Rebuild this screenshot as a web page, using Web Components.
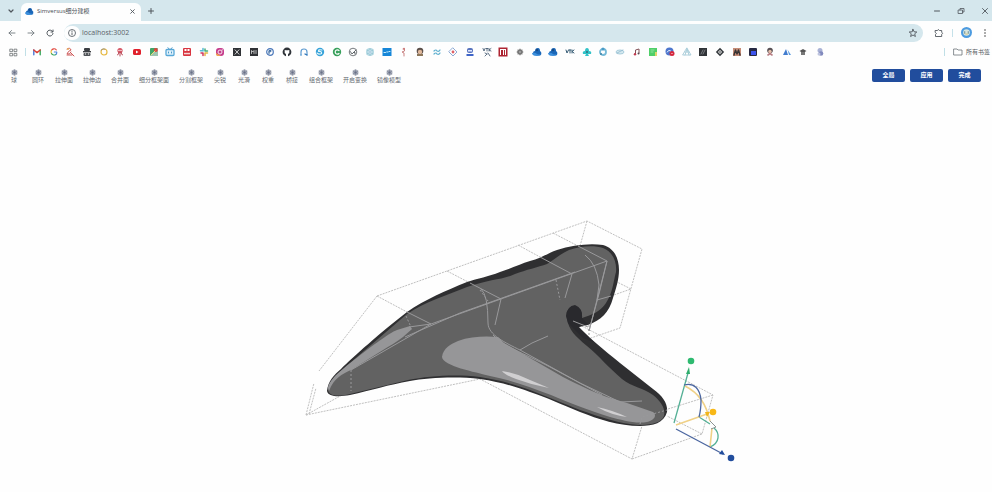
<!DOCTYPE html>
<html lang="zh-CN">
<head>
<meta charset="utf-8">
<title>Simversus细分建模</title>
<style>
html, body { height: 100%; }
body { margin: 0; background: #fefefe; font-family: "Open Sans", "Noto Sans CJK SC", sans-serif; color: #555b61; }
</style>
</head>
<body>
<browser-window></browser-window>
<script>
const BASE = `<style>
*{box-sizing:border-box}
button{border:0;padding:0;margin:0;background:none;font:inherit;color:inherit;display:flex;align-items:center;justify-content:center;flex:none}
svg{display:block}
</style>`;

function define(name, html, setup) {
  customElements.define(name, class extends HTMLElement {
    constructor() {
      super();
      this.attachShadow({ mode: 'open' }).innerHTML = BASE + html;
    }
    connectedCallback() {
      if (setup && !this.ready) { this.ready = true; setup(this, this.shadowRoot); }
    }
  });
}

const stroke = (d, w = 1, c = '#50575d') => `<path d="${d}" fill="none" stroke="${c}" stroke-width="${w}" stroke-linecap="round" stroke-linejoin="round"/>`;
const fill = (d, c) => `<path d="${d}" fill="${c}"/>`;
const dot = (x, y, r, c) => `<circle cx="${x}" cy="${y}" r="${r}" fill="${c}"/>`;
const ring = (x, y, r, w, c) => `<circle cx="${x}" cy="${y}" r="${r}" fill="none" stroke="${c}" stroke-width="${w}"/>`;
const box = (x, y, w, h, c, r = 0) => `<rect x="${x}" y="${y}" width="${w}" height="${h}" rx="${r}" fill="${c}"/>`;

const cloud = fill('M1 6Q1 4 3 4Q3 1 6 1Q8 1 8 4Q10 5 9 8Q7 9 4 8Q1 9 1 6Z', '#1b67b8') + fill('M0 6Q3 5 5 7Q7 8 9 7Q8 9 5 9Q0 9 0 6Z', '#3c8fdc') + dot(5, 3, 1.2, '#174a86');

const ICONS = {
  down: stroke('M3 4L5 6L7 4', 1.2),
  close: stroke('M3 3L7 7M7 3L3 7', 1),
  plus: stroke('M5 2.5V7.5M2.5 5H7.5', 1),
  min: stroke('M2.5 5H7.5', 1),
  restore: stroke('M2.5 4H6.5V7.5H2.5ZM4 4V2.5H8V6H6.5', .8),
  exit: stroke('M2.5 2.5L7.5 7.5M7.5 2.5L2.5 7.5', .9),
  back: stroke('M8 5H2M4.5 2.5L2 5L4.5 7.5', .9, '#737a80'),
  next: stroke('M2 5H8M5.5 2.5L8 5L5.5 7.5', .9, '#737a80'),
  reload: stroke('M7.6 3.5A3 3 0 1 0 8 5.5M8 2V4H6', 1),
  info: ring(5, 5, 3.5, .9, '#5c6369') + stroke('M5 4.8V6.7', .9) + dot(5, 3.2, .6, '#50575d'),
  star: stroke('M5 1.3L6.1 3.8L8.8 4L6.7 5.8L7.4 8.5L5 7L2.6 8.5L3.3 5.8L1.2 4L3.9 3.8Z', .9),
  ext: stroke('M1.5 2.5H3.5Q4 .5 5.5 2.5H7.7V4.2Q9.6 5.2 7.7 6.3V8.5H1.5V6.5Q3.5 5.5 1.5 4.5Z', .9),
  more: dot(5, 2, .8, '#444') + dot(5, 5, .8, '#444') + dot(5, 8, .8, '#444'),
  avatar: dot(5, 5, 5, '#4c9be0') + dot(5, 5, 3, '#d9e6df') + stroke('M3.4 4.2V5.8M6.6 4.2V5.8', .9, '#688b8f') + stroke('M4.3 6.4H5.7', .7, '#d7b85d'),
  apps: stroke('M1.3 1.3H4V4H1.3ZM6 1.3H8.7V4H6ZM1.3 6H4V8.7H1.3ZM6 6H8.7V8.7H6Z', .8, '#5c6165'),
  folder: stroke('M1 2H4L5 3H9V8H1Z', .8, '#6c7379'),
  tool: dot(5, 5, 4.2, '#a7acb9') + stroke('M5 1V9M1.5 3L8.5 7M8.5 3L1.5 7', .7, '#70778b') + dot(5, 5, 1.5, '#687087'),
  site: cloud
};

const BOOKMARKS = [
  ['Gmail', stroke('M1.8 7.8V3', 1.4, '#4978d8') + stroke('M8.2 7.8V3', 1.4, '#37a65a') + stroke('M1.8 3L5 5.6L8.2 3', 1.5, '#dc4136')],
  ['Google', stroke('M7.3 2.8A3 3 0 0 0 2.4 3.5', 1.1, '#e2483e') + stroke('M2.4 3.5A3 3 0 0 0 2.5 6.6', 1.1, '#efb92f') + stroke('M2.5 6.6A3 3 0 0 0 7 7.3', 1.1, '#38a85c') + stroke('M7 7.3Q8 6.3 7.8 5H5.3', 1.1, '#4b84dd')],
  ['Figure', stroke('M2 2Q5 0 6 3Q3 4 2 7Q5 8 6 5M6 6L9 9M2 8H7', 1, '#cd5757') + dot(3, 2, 1, '#e6ac5a')],
  ['Agent', box(2, 1, 6, 3, '#3b3e42', 1) + box(1, 4, 8, 1.4, '#3b3e42') + box(1.5, 6, 7, 3, '#505358', 1) + dot(3.5, 7, .7, '#ddd') + dot(6.5, 7, .7, '#ddd')],
  ['Ring', ring(5, 5, 3, 1.2, '#e6b942') + stroke('M2 3Q4 1 6 2', .8, '#8c8170')],
  ['Octopus', dot(5, 3.5, 2.6, '#d55262') + stroke('M2.5 8Q4 8 4 5M7.5 8Q6 8 6 5M5 6V9', 1, '#b74351') + dot(4, 3.5, .7, '#fff') + dot(6, 3.5, .7, '#fff')],
  ['YouTube', box(1, 2, 8, 6, '#e0212c', 1.6) + fill('M4 3.6V6.4L6.5 5Z', '#fff')],
  ['Maps', box(1, 1, 8, 8, '#43a467', 1) + fill('M1 9L9 1V9Z', '#9dc4b0') + dot(6.8, 3, 2, '#d9473f') + stroke('M2 8L6 4', 1, '#f5e17b')],
  ['Bilibili', `<rect x="1" y="2.5" width="8" height="6" rx="1" fill="#dff1fb" stroke="#57a7d7" stroke-width="1.3"/>` + stroke('M3 .7L4.2 2M7 .7L5.8 2M3.5 5V6M6.5 5V6', 1, '#4898c8')],
  ['Calendar', box(1, 1, 8, 8, '#d9343f', 1) + box(2.5, 2, 2, 2, '#fff') + box(5.5, 2, 2, 2, '#fff') + box(2, 5.8, 6, 1.5, '#f5d6d6')],
  ['Slack', stroke('M4 1.5V4M1.5 3.7H3.5', 1.5, '#54b9d5') + stroke('M6 2V4M6.5 4H8.5', 1.5, '#46ae79') + stroke('M2 6H4V8.5', 1.5, '#cf3860') + stroke('M6 6V8.5M6.5 6H8.5', 1.5, '#e6b345')],
  ['Instagram', box(1, 1, 8, 8, '#c53c8c', 3) + fill('M1 6L6 9H3Q1 9 1 7Z', '#f2a74c') + ring(5, 5, 2, 1, '#f8e4ec') + dot(7.2, 2.8, .6, '#fff')],
  ['X', box(1, 1, 8, 8, '#303236') + stroke('M3 2.8L7 7.2M7 2.8L3 7.2', .8, '#eee')],
  ['M1', box(1, 1, 8, 8, '#303236') + stroke('M2.5 6.5V3.5L3.7 5L5 3.5V6.5M7 3.5V6.5', .8, '#ddd')],
  ['Blue badge', ring(5, 5, 3.3, 1.2, '#4b78ba') + stroke('M4 7V3.4H6Q7 5 4 5', 1, '#33649e')],
  ['GitHub', dot(5, 5, 4.4, '#303439') + fill('M2.7 3L4 3.3H6L7.3 3V6L6 7V10H4V7L2.7 6Z', '#fff')],
  ['Arch', stroke('M2 8V5Q2 2 5 2Q8 2 8 5V8', 1.2, '#5e9bd0') + stroke('M6 7L8 8', 1.3, '#2871b6') + dot(2, 8, .8, '#6ca6d7')],
  ['Swirl', dot(5, 5, 4.2, '#36a2d9') + stroke('M7 3Q3 2 3.5 4.5Q7 4 6.6 6.6Q4 8 2 6', 1.1, '#e3f5fa')],
  ['Green C', dot(5, 5, 4.2, '#38a05c') + stroke('M7 3.5A2.2 2.2 0 1 0 7 6.5', 1.2, '#fff')],
  ['VS', ring(5, 5, 3.8, .8, '#555b60') + stroke('M2.3 4.5L4 7L8 3M5.5 5.5H7V7', .9, '#555b60')],
  ['Atom', dot(5, 5, 4, '#b4d9e3') + stroke('M2 3L8 7M2 7L8 3M5 1.5V8.5', .6, '#7fb7c9') + ring(5, 5, 1.3, .6, '#eef')],
  ['SPLINE', box(.5, 1, 9, 8, '#1686d8') + stroke('M2 5.5H3.5M4.7 5H6M7 4.5H8', 1, '#c9ecfa')],
  ['Runner', stroke('M5 2H6.5V4L4 5L6 6V9', 1, '#c98282') + dot(6, 1.8, 1, '#cc7777')],
  ['Portrait', dot(5, 4, 3.3, '#5b4e49') + dot(5, 5, 2.2, '#e1b99c') + box(2, 7, 6, 2, '#8c765a')],
  ['Tailwind', stroke('M2 4Q4 2 5 4Q7 5 8 3M2 7Q4 5 5 7Q7 8 8 6', 1.2, '#5dafcf')],
  ['Diamond', stroke('M5 1L9 5L5 9L1 5Z', 1, '#8eaad4') + dot(5, 5, 1.4, '#df5f65')],
  ['Robot', box(2, 1, 6, 5, '#5873bd', 2) + box(1.5, 7, 7, 2, '#3e64c8') + box(3, 3, 4, 1.5, '#dfe8ff')],
  ['VTK text', stroke('M1 1.5L2 4L3 1.5M4 1.5H6M5 1.5V4M7 1.5V4M9 1.5L7 3L9 4M3 6L5 7M6 6L8 9M3 9L5 7', .8, '#39506a')],
  ['npm', box(.5, .5, 9, 9, '#ae2532') + box(2, 2, 6, 6, '#fff') + box(3, 3, 2, 5, '#ae2532') + box(6, 3, 1, 5, '#ae2532')],
  ['Gear', dot(5, 5, 2.8, '#777') + stroke('M5 2V8M2 5H8M3 3L7 7M7 3L3 7', .8, '#777') + dot(5, 5, 1, '#aaa')],
  ['Simversus', cloud],
  ['Simversus 2', cloud],
  ['VTK', stroke('M1 3L2 6L3.5 3M4 3H6M5 3V6M7 3V6M9 3L7 4.5L9 6', 1, '#365c75')],
  ['Cyan', fill('M5 1Q7 1 7 4Q10 4 9 7L6 7L7 9H3L4 7L1 7Q0 4 3 4Q3 1 5 1Z', '#32c3c8') + dot(5, 5, 1, '#376b7d')],
  ['Orbit', ring(5, 5, 3, 1.8, '#75b9d7') + dot(5, 2, 1.5, '#4a9bc7') + dot(3, 7, 1, '#4284a9')],
  ['Planet', `<ellipse cx="5" cy="5" rx="4" ry="2" fill="#d4e8ef" stroke="#a8cddc"/>` + stroke('M2 6L8 3', .7, '#86b2c9')],
  ['Music', stroke('M3.5 7V3L7 2V6', 1, '#835259') + dot(3, 7.2, 1.2, '#c03b50') + dot(6.5, 6.5, 1, '#534b50')],
  ['Green page', box(1, 1, 8, 8, '#4fcf69') + box(7, 5, 2, 4, '#dfd56d') + stroke('M3 3H6M3 5H5', .8, '#a3e7af')],
  ['Red badge', dot(4.5, 4.5, 4, '#4d76cd') + stroke('M2 5Q4 2 6 4', 1, '#e6edfa') + dot(7, 6.5, 2.5, '#d5273e') + dot(7, 6.5, .6, '#fff')],
  ['Prism', stroke('M5 1.2L9 8H1ZM3 5H7M5 2L3 8M5 2L7 8', .8, '#9cc5d4')],
  ['Black square', box(1, 1, 8, 8, '#303337') + stroke('M3 7L5 3M5 7L7 3', .7, '#989ba0')],
  ['Black diamond', fill('M5 .8L9.2 5L5 9.2L.8 5Z', '#363a3e') + ring(5, 5, 1.3, 1, '#e0e0e0')],
  ['Mountains', box(1, 1, 8, 8, '#c68d78') + stroke('M2 8L3.5 3L5 7L6.5 3L8 8', 1.4, '#383535')],
  ['Blue screen', box(1, 1, 8, 8, '#272943', 1) + box(3, 4, 5, 4, '#3d54ed')],
  ['Person', dot(5, 3.5, 2.8, '#554e53') + dot(5, 4.5, 1.7, '#e6bea9') + stroke('M3 8L5 6.5L7 8', 1.6, '#b77d83')],
  ['Peaks', fill('M1 8L4 2L6 8Z', '#427cce') + fill('M5.5 2.5L9 8H7Z', '#5698df')],
  ['Ink', fill('M1.5 4L5 2L8.5 4L5 6Z', '#555') + fill('M3 5H7V8H3Z', '#777')],
  ['Lavender', dot(5, 3.5, 2.5, '#a9b2d5') + dot(6, 6.5, 2.3, '#8189bd') + dot(4, 7, 1.5, '#bec4df')]
];

const svg = (body, size) => `<svg width="${size}" height="${size}" viewBox="0 0 10 10" aria-hidden="true">${body}</svg>`;

define('ui-icon', `<style>:host,div{display:block;flex:none}</style><div></div>`, (el, r) => {
  r.querySelector('div').innerHTML = svg(ICONS[el.getAttribute('name')], el.getAttribute('size') || 10);
});

define('tab-strip', `<style>
:host{display:flex;align-items:flex-end;height:21px;background:#d5e7ed;overflow:hidden}
.drop{width:21px;height:21px}
.tab{display:flex;align-items:center;width:120px;height:18px;padding:0 4px 2px;border-radius:6px 6px 0 0;background:#fefefe;font-size:6px;line-height:10px;color:#454b51}
.tab span{flex:1;margin-left:3px;white-space:nowrap}
.new{width:20px;height:21px}
.win{margin-left:auto;margin-right:-5px;display:flex}
.win button{width:24px;height:21px}
</style>
<button class="drop" aria-label="搜索标签页"><ui-icon name="down"></ui-icon></button>
<div class="tab"><ui-icon name="site" size="9"></ui-icon><span>Simversus细分建模</span><button aria-label="关闭标签页"><ui-icon name="close" size="9"></ui-icon></button></div>
<button class="new" aria-label="新标签页"><ui-icon name="plus"></ui-icon></button>
<div class="win"><button aria-label="最小化"><ui-icon name="min"></ui-icon></button><button aria-label="还原"><ui-icon name="restore"></ui-icon></button><button aria-label="关闭"><ui-icon name="exit"></ui-icon></button></div>`);

define('address-bar', `<style>
:host{display:flex;align-items:center;height:23px;padding:0 2px;background:#fefefe}
.nav{width:19px;height:20px}
.url{flex:1;display:flex;align-items:center;height:18px;margin-left:5px;border-radius:9px;background:#d5e7ed;padding-right:5px}
.info{width:16px;height:14px;border-radius:7px;background:#fefefe}
input{flex:1;min-width:0;border:0;outline:0;padding:0 0 0 2px;background:none;font:7px/12px "Open Sans",sans-serif;color:#5b6268}
.ext{width:20px;margin-left:6px}
i{width:1px;height:8px;margin:0 8px 0 3px;background:#c5e1e9}
.more{width:14px;margin:0 -2px 0 6px}
</style>
<button class="nav" aria-label="返回"><ui-icon name="back"></ui-icon></button>
<button class="nav" aria-label="前进"><ui-icon name="next"></ui-icon></button>
<button class="nav" aria-label="重新加载"><ui-icon name="reload"></ui-icon></button>
<div class="url"><button class="info" aria-label="网站信息"><ui-icon name="info"></ui-icon></button><input aria-label="地址" value="localhost:3002"><button aria-label="收藏"><ui-icon name="star"></ui-icon></button></div>
<button class="ext" aria-label="扩展程序"><ui-icon name="ext"></ui-icon></button><i></i>
<button aria-label="个人资料"><ui-icon name="avatar" size="11"></ui-icon></button>
<button class="more" aria-label="更多"><ui-icon name="more"></ui-icon></button>`);

define('bookmark-bar', `<style>
:host{display:flex;align-items:center;height:16px;padding:0 2px 0 9px;background:#fefefe}
i{width:1px;height:8px;background:#c0dfe6}
nav{flex:1;display:flex;justify-content:space-between;margin:0 119px 0 6px}
a{display:block}
.all{margin-left:8px;gap:3px;font-size:6px;line-height:10px}
.all span{white-space:nowrap}
.apps{margin-right:7px}
</style>
<button class="apps" aria-label="应用"><ui-icon name="apps" size="9"></ui-icon></button><i></i>
<nav aria-label="书签"></nav><i></i>
<button class="all"><ui-icon name="folder"></ui-icon><span>所有书签</span></button>`, (el, r) => {
  r.querySelector('nav').innerHTML = BOOKMARKS.map(([n, b]) => `<a href="#" aria-label="${n}">${svg(b, 10)}</a>`).join('');
});

define('tool-item', `<style>
:host{display:block;min-width:14px}
button{width:100%;flex-direction:column;font-size:6px;line-height:9px;color:#62686e;white-space:nowrap}
</style><button><ui-icon name="tool" size="7"></ui-icon><slot></slot></button>`);

define('primary-button', `<style>
:host{display:block}
button{width:33px;height:13px;border-radius:2px;background:#214d9d;color:#fff;font-size:6px;line-height:13px;font-weight:700}
</style><button><slot></slot></button>`);

define('model-toolbar', `<style>
:host{display:flex;align-items:flex-start;justify-content:space-between;padding:9px 11px 0 7px}
.tools{display:flex;gap:10px}
.actions{display:flex;gap:5px}
</style>
<div class="tools"></div>
<div class="actions"><primary-button>全局</primary-button><primary-button>应用</primary-button><primary-button>完成</primary-button></div>`, (el, r) => {
  r.querySelector('.tools').innerHTML = '球 圆环 拉伸面 拉伸边 合并面 细分框架面 分割框架 尖锐 光滑 权重 桥接 组合框架 开启变换 镜像模型'
    .split(' ').map(t => `<tool-item>${t}</tool-item>`).join('');
});

define('model-scene', `<style>
:host{display:block}
svg{width:100%}
.cage{fill:none;stroke:#c0c0c0;stroke-width:1;stroke-dasharray:2 1}
.edge{fill:none;stroke:#99999b;stroke-width:1}
</style>
<svg viewBox="0 90 992 402" role="img" aria-label="模型">
<path class="cage" d="M377 296L587 221L642 249L620 328L588 339M587 221L580 246M377 296L319 371M377 296L407 312M447 271L470 283M518 245L540 257M553 233L578 246M613 280L631 289L611 296M306 415L480 379L632 459L642 426M306 415L314 383M309 414L316 388M306 415L342 395M632 459L702 434L713 395L580 325M702 434L667 416M713 395L655 413"/>
<path fill="#2f2f31" d="M327 391C328 381 334 375 341 369C353 357 380 333 407 312C426 299 445 291 467 282C478 278 488 277 500 272C510 269 520 264 530 261C542 258 548 253 557 250C572 245 590 243 603 245C614 248 619 258 619 270C619 279 616 289 613 298C609 313 601 320 588 325L579 327C587 336 604 350 620 363L653 389C663 396 668 404 667 412C664 423 653 426 640 426C619 426 598 419 580 412C560 404 548 398 530 392C516 387 501 382 480 379C455 376 427 378 410 381C388 385 372 390 350 395C339 397 328 397 327 391Z"/>
<path fill="#626262" d="M328 389C330 380 339 373 350 363L407 314C425 302 447 295 467 287C490 279 502 280 515 274C526 270 538 267 547 264C555 259 560 254 569 250C580 246 594 245 603 248C613 252 617 262 616 272C613 283 613 292 606 303C601 311 592 315 582 318C583 310 577 304 571 307C567 309 566 314 567 319C569 330 575 336 587 346C600 357 608 367 622 379C632 387 644 388 653 395C662 402 667 411 663 418C658 424 649 425 638 425C621 424 600 417 580 410L530 390C513 384 500 380 480 377C455 374 429 376 408 380L350 394C337 397 328 396 328 389Z"/>
<path fill="#969698" d="M328 388C329 378 347 366 359 356C371 347 389 333 397 330L410 326L412 329L403 337C397 342 389 346 383 350L351 370C342 374 334 378 329 391ZM442 357C443 348 451 344 458 341C471 336 487 336 498 337L504 343L563 377C579 385 591 391 607 397L627 403L653 412C657 415 655 420 647 422C635 424 622 420 610 417C587 410 568 402 551 395C530 387 511 380 490 376C475 372 443 366 442 357Z"/>
<path fill="#d0cfd1" d="M502 371Q516 373 530 380L549 388Q532 385 516 379Q505 375 502 371ZM597 407Q612 410 627 417Q611 415 597 407Z"/>
<path class="edge" d="M407 312L431 324L607 261M470 283L501 299L495 325M540 257L572 274L565 298M578 246L607 261L589 331M409 327L431 324L351 370M405 337L460 313L575 272M481 289Q488 295 488 323C488 335 506 343 520 350L580 383L620 402L642 401M493 335C503 346 523 353 550 367L602 395M520 350L532 343L548 336M585 255Q597 264 599 285L597 300L611 296M607 261L600 290L589 331"/>
<path class="edge" stroke-dasharray="2 2" d="M351 370V391M556 280L560 300M480 290L488 301M640 424L642 417L667 410M406 316L411 327M589 325V339"/>
<path fill="#29292d" d="M566 316Q567 306 575 305Q583 308 582 318L588 324L578 327L594 342L583 338L568 323Z"/>
<path class="edge" d="M573 321L588 327"/>
<g fill="none" stroke-width="1.3">
<path stroke="#55b096" d="M674 423L688 373M699 417L710 424M710 447C720 443 720 433 714 428"/>
<path stroke="#f0d187" stroke-width="1.6" d="M676 425L707 414M685 386C699 393 706 404 710 421M712 428L710 447"/>
<path stroke="#4b66a0" d="M676 429L723 454M684 385C694 382 700 389 701 400Q701 410 699 417"/>
<path stroke="#8b9291" stroke-width="1" d="M710 421L716 427L711 429"/>
</g>
<path fill="#2fae6d" d="M689 367L686 374L690 374Z"/><path fill="#f2b51b" d="M710 412L705 412L707 417Z"/><path fill="#214d9d" d="M725 455L719 454L722 450Z"/>
<circle cx="691" cy="361" r="3.3" fill="#2eba70"/><circle cx="713" cy="412" r="3.3" fill="#f8b817"/><circle cx="731" cy="458" r="3.3" fill="#214d9d"/>
</svg>`);

define('browser-window', `<style>
:host{display:flex;flex-direction:column;min-height:100%}
model-toolbar{height:30px}
</style><tab-strip></tab-strip><address-bar></address-bar><bookmark-bar></bookmark-bar><main><model-toolbar></model-toolbar><model-scene></model-scene></main>`);
</script>
</body>
</html>
